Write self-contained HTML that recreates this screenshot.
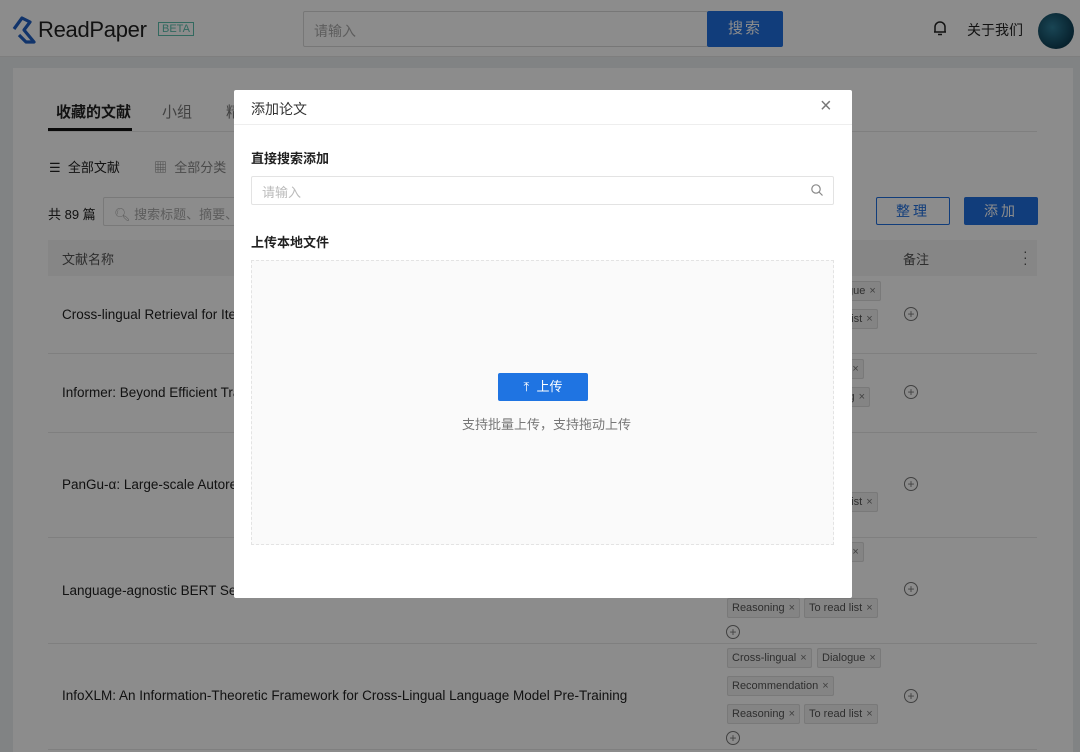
<!DOCTYPE html>
<html><head><meta charset="utf-8"><style>
*{margin:0;padding:0;box-sizing:border-box}
html,body{width:1080px;height:752px;overflow:hidden}
body{position:relative;background:#eceef1;font-family:"Liberation Sans","Noto Sans CJK SC",sans-serif;color:#333}
.a{position:absolute}
.hdr{left:0;top:0;width:1080px;height:57px;background:#fff;border-bottom:1px solid #e6e6e6}
.card{left:13px;top:68px;width:1060px;height:684px;background:#fff}
.tag{position:absolute;height:20px;line-height:18px;font-size:11px;color:#555;background:#f0f0f0;border:1px solid #dcdcdc;border-radius:2px;padding:0 4px;white-space:nowrap}
.tag b{font-weight:normal;margin-left:4px;color:#777}
.pl{position:absolute;width:14px;height:14px;border:1px solid #777;border-radius:50%;font-size:12px;line-height:12px;text-align:center;color:#777}
.ttl{position:absolute;left:62px;font-size:13.5px;color:#222;white-space:nowrap}
.sep{position:absolute;left:48px;width:989px;height:1px;background:#e8e8e8}
.ov{left:0;top:0;width:1080px;height:752px;background:rgba(0,0,0,0.45)}
.modal{left:234px;top:90px;width:618px;height:508px;background:#fff;border-radius:2px}
</style></head><body>
<div class="a hdr"></div>
<svg class="a" style="left:10px;top:14px" width="30" height="32" viewBox="0 0 30 32"><path d="M4 15 L12 4 L20 8 L14 16 L24 28 L16 28 L9 21" fill="none" stroke="#1f5fc4" stroke-width="3.2" stroke-linejoin="round"/></svg>
<div class="a" style="left:38px;top:17px;font-size:22px;color:#222;letter-spacing:-0.3px">ReadPaper</div>
<div class="a" style="left:158px;top:22px;height:14px;padding:0 3px;border:1px solid #5bbfae;color:#5bbfae;font-size:11px;line-height:12px">BETA</div>
<div class="a" style="left:303px;top:11px;width:405px;height:36px;border:1px solid #d9d9d9;border-radius:2px;font-size:14px;color:#aaa;padding:9px 10px">请输入</div>
<div class="a" style="left:707px;top:11px;width:76px;height:36px;background:#1f6fe0;border-radius:2px;color:#fff;font-size:15px;text-align:center;line-height:36px;letter-spacing:2px">搜索</div>
<svg class="a" style="left:931px;top:19px" width="18" height="18" viewBox="0 0 18 18"><path d="M4 13V8a5 5 0 0 1 10 0v5H3h12M7 15.5h4" fill="none" stroke="#222" stroke-width="1.5"/></svg>
<div class="a" style="left:967px;top:20px;font-size:14px;color:#222">关于我们</div>
<div class="a" style="left:1038px;top:13px;width:36px;height:36px;border-radius:50%;background:radial-gradient(circle at 40% 40%,#2f7f9a,#0e3f55 70%,#06222f)"></div>

<div class="a card"></div>
<div class="a" style="left:56px;top:101px;font-size:15px;font-weight:bold;color:#222">收藏的文献</div>
<div class="a" style="left:48px;top:128px;width:84px;height:3px;background:#111"></div>
<div class="a" style="left:48px;top:131px;width:989px;height:1px;background:#e8e8e8"></div>
<div class="a" style="left:162px;top:101px;font-size:15px;color:#777">小组</div>
<div class="a" style="left:226px;top:101px;font-size:15px;color:#777">精</div>
<div class="a" style="left:49px;top:157px;font-size:13px;color:#222">☰&nbsp; 全部文献</div>
<div class="a" style="left:154px;top:157px;font-size:13px;color:#888">▦&nbsp; 全部分类</div>
<div class="a" style="left:48px;top:204px;font-size:13px;color:#222">共 89 篇</div>
<div class="a" style="left:103px;top:197px;width:400px;height:29px;border:1px solid #ddd;border-radius:2px;font-size:13px;color:#aaa;padding:6px 10px">🔍︎ 搜索标题、摘要、笔</div>
<div class="a" style="left:876px;top:197px;width:74px;height:28px;border:1px solid #1f6fe0;color:#1f6fe0;border-radius:2px;text-align:center;line-height:26px;font-size:14px;letter-spacing:3px">整理</div>
<div class="a" style="left:964px;top:197px;width:74px;height:28px;background:#1f6fe0;color:#fff;border-radius:2px;text-align:center;line-height:28px;font-size:14px;letter-spacing:3px">添加</div>
<div class="a" style="left:48px;top:240px;width:989px;height:36px;background:#f5f5f5"></div>
<div class="a" style="left:62px;top:249px;font-size:13px;color:#555">文献名称</div>
<div class="a" style="left:903px;top:249px;font-size:13px;color:#555">备注</div>
<div class="a" style="left:1023px;top:248px;font-size:14px;color:#555;line-height:6px">·<br>·<br>·</div>

<div class="ttl" style="top:307px">Cross-lingual Retrieval for Iterative Self-Supervised Training</div>
<div class="ttl" style="top:385px">Informer: Beyond Efficient Transformer for Long Sequence</div>
<div class="ttl" style="top:477px">PanGu-α: Large-scale Autoregressive Pretrained Chinese</div>
<div class="ttl" style="top:583px">Language-agnostic BERT Sentence Embedding</div>
<div class="ttl" style="top:688px">InfoXLM: An Information-Theoretic Framework for Cross-Lingual Language Model Pre-Training</div>
<div class="sep" style="top:353px"></div><div class="sep" style="top:432px"></div><div class="sep" style="top:537px"></div><div class="sep" style="top:643px"></div><div class="sep" style="top:749px"></div>

<div class="tag" style="left:817px;top:281px">Dialogue<b>×</b></div>
<div class="tag" style="left:804px;top:309px">To read list<b>×</b></div>
<div class="pl" style="left:904px;top:307px">+</div>
<div class="tag" style="left:800px;top:359px">Dialogue<b>×</b></div>
<div class="tag" style="left:797px;top:387px">Reasoning<b>×</b></div>
<div class="pl" style="left:904px;top:385px">+</div>
<div class="tag" style="left:804px;top:492px">To read list<b>×</b></div>
<div class="pl" style="left:904px;top:477px">+</div>
<div class="tag" style="left:800px;top:542px">Dialogue<b>×</b></div>
<div class="tag" style="left:727px;top:598px">Reasoning<b>×</b></div>
<div class="tag" style="left:804px;top:598px">To read list<b>×</b></div>
<div class="pl" style="left:726px;top:625px">+</div>
<div class="pl" style="left:904px;top:582px">+</div>
<div class="tag" style="left:727px;top:648px">Cross-lingual<b>×</b></div>
<div class="tag" style="left:817px;top:648px">Dialogue<b>×</b></div>
<div class="tag" style="left:727px;top:676px">Recommendation<b>×</b></div>
<div class="tag" style="left:727px;top:704px">Reasoning<b>×</b></div>
<div class="tag" style="left:804px;top:704px">To read list<b>×</b></div>
<div class="pl" style="left:726px;top:731px">+</div>
<div class="pl" style="left:904px;top:689px">+</div>

<div class="a ov"></div>
<div class="a modal">
 <div class="a" style="left:17px;top:9px;font-size:14px;color:#333">添加论文</div>
 <div class="a" style="left:586px;top:5px;font-size:20px;color:#777">×</div>
 <div class="a" style="left:0;top:34px;width:618px;height:1px;background:#eee"></div>
 <div class="a" style="left:17px;top:58px;font-size:13px;font-weight:bold;color:#222">直接搜索添加</div>
 <div class="a" style="left:17px;top:86px;width:583px;height:29px;border:1px solid #e3e3e3;border-radius:2px;font-size:13px;color:#bbb;padding:5px 10px">请输入</div>
 <svg class="a" style="left:576px;top:93px" width="14" height="14" viewBox="0 0 14 14"><circle cx="6" cy="6" r="4.2" fill="none" stroke="#888" stroke-width="1.2"/><path d="M9 9l3.5 3.5" stroke="#888" stroke-width="1.2"/></svg>
 <div class="a" style="left:17px;top:142px;font-size:13px;font-weight:bold;color:#222">上传本地文件</div>
 <div class="a" style="left:17px;top:170px;width:583px;height:285px;background:#fafafa;border:1px dashed #e3e3e3"></div>
 <div class="a" style="left:264px;top:283px;width:90px;height:28px;background:#1f74e2;border-radius:2px;color:#fff;font-size:13px;text-align:center;line-height:28px">⤒&nbsp; 上传</div>
 <div class="a" style="left:228px;top:324px;font-size:13px;color:#777">支持批量上传，支持拖动上传</div>
</div>
</body></html>
